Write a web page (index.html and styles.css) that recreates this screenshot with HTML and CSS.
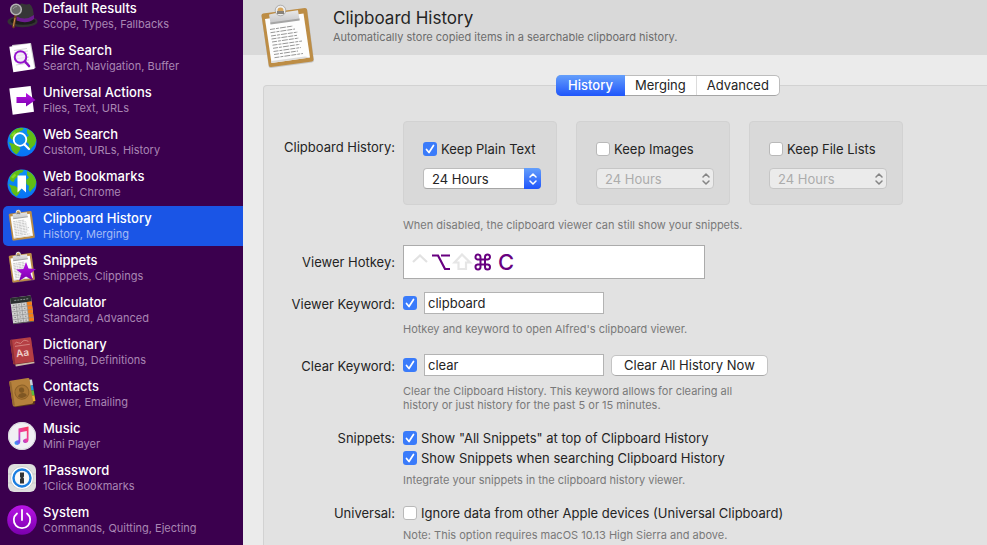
FILE: index.html
```html
<!DOCTYPE html>
<html lang="en">
<head>
    <meta charset="UTF-8">
    <meta name="viewport" content="width=device-width, initial-scale=1.0">
    <title>Clipboard History</title>
    <link rel="stylesheet" href="styles.css">
</head>
<body>
    <!-- shared drawings -->
    <svg class="defs" aria-hidden="true">
        <defs>
            <linearGradient id="purple" x1="0" y1="0" x2="0" y2="1">
                <stop offset="0" stop-color="#b914e6"/>
                <stop offset="1" stop-color="#7a00ad"/>
            </linearGradient>
            <linearGradient id="ocean" x1="0" y1="0" x2="0" y2="1">
                <stop offset="0" stop-color="#0b93f5"/>
                <stop offset="1" stop-color="#0872f5"/>
            </linearGradient>
            <linearGradient id="note" x1="1" y1="0" x2="0" y2="1">
                <stop offset="0" stop-color="#ff3b55"/>
                <stop offset="0.45" stop-color="#e83fa8"/>
                <stop offset="0.75" stop-color="#7d50ee"/>
                <stop offset="1" stop-color="#20b4f5"/>
            </linearGradient>
            <linearGradient id="metal" x1="0" y1="0" x2="0" y2="1">
                <stop offset="0" stop-color="#f4f4f4"/>
                <stop offset="1" stop-color="#c4c4c6"/>
            </linearGradient>
        </defs>
        <symbol id="clipboard" viewBox="0 0 56 64">
            <path d="M3 10L45 4.500Q47 4.500 47.300 6L54 56Q54 58 52 58.500L11 64Q9 64 8.700 62.500L1.500 12Q1.500 10.500 3 10z" fill="#8b8b8b" opacity="0.4"/>
            <path d="M3 9.500L45 4Q46.800 4 47 5.500L53.500 55.500Q53.500 57 52 57.500L11 63Q9 63 8.800 61.500L1.500 11.500Q1.500 10 3 9.500z" fill="#bd8d45"/>
            <path d="M5 15L43.500 9.500L50 53.500L11.500 59z" fill="#fdfdfd"/>
            <path d="M50 53.500L11.500 59L11.200 57L45 52.500z" fill="#dcdcdc"/>
            <g stroke="#8a8a8a" stroke-width="0.900" stroke-dasharray="5 1 3 1 6 1">
                <path d="M10 25.500L33 22M10.500 28.700L35 25M11 32L38 28M11.500 35L37 31.300M12 38L39 34M12.500 41.200L42 37M13 44.300L40 40.300M13.500 47.500L41 43.500M14 50.500L38 47M14.500 53.700L43 49.500"/>
            </g>
            <path d="M9 10.500L16 9Q15 3.500 19.500 2.200Q24.500 1.500 25.500 8L38 6.300L39.500 15.500L10.500 19.500z" fill="url(#metal)"/>
            <path d="M10.200 18.500L39.500 14.500L39.700 16.500L10.500 20.500z" fill="#a5a5a5"/>
            <circle cx="20.500" cy="6.500" r="4" fill="#d9a75b" stroke="#eee" stroke-width="2"/>
            <circle cx="20.500" cy="6.500" r="5.300" fill="none" stroke="#8e8e8e" stroke-width="0.600"/>
            <path d="M17 7H24V10H17z" fill="#87827a"/>
        </symbol>
        <symbol id="globe" viewBox="0 0 30 30">
            <circle cx="15" cy="15" r="14.500" fill="url(#ocean)"/>
            <path d="M5 5Q9 1.200 14 .8L17 1.500L15 3.500L13 4L11 7L8 10L6.500 13L4 12L2.500 9z" fill="#61bd16"/>
            <path d="M1.500 15L5 16.500L8 17L12 19.500L13.500 21.500L12 24.500L9.500 27.500Q6 25.500 4.500 22.500L4 19.500z" fill="#61bd16"/>
            <path d="M20 2L24 4Q28.500 8 29.200 13L28 17.500L25 20.500L23 23L21.500 20.500L22 17L19.500 15L19 11L22 8.500L20 6z" fill="#61bd16"/>
            <path d="M4 8L8 4.500L9 6.500L6 9.500z" fill="#86d92b"/>
        </symbol>
        <symbol id="updown" viewBox="0 0 10 14">
            <path d="M2 5L5 2L8 5M2 9L5 12L8 9" fill="none" stroke="currentColor" stroke-width="1.500" stroke-linecap="round" stroke-linejoin="round"/>
        </symbol>
    </svg>

    <nav class="sidebar" aria-label="Features">
        <a class="item" href="#">
            <svg class="icon" viewBox="0 0 30 30">
                <ellipse cx="15.500" cy="20.500" rx="15" ry="5.800" fill="#333"/>
                <ellipse cx="16" cy="20" rx="12.500" ry="3.800" fill="#1b1b1b"/>
                <path d="M9.500 18Q10 3 15 2.500Q19 4 22.500 3Q26.500 5 27 17.500Q19 23.500 9.500 18z" fill="#363636"/>
                <path d="M9.500 15.500Q19 20 27 14V18Q20 23.500 9.500 19.500z" fill="#6c1c8f"/>
                <path d="M8.500 14.500L6.500 26" stroke="#70401c" stroke-width="2.400" stroke-linecap="round"/>
                <path d="M8 17L6.300 25.500" stroke="#c98e50" stroke-width="1"/>
                <circle cx="9" cy="8.500" r="5.300" fill="#6a6a6a" stroke="#b5b5b5" stroke-width="1.500"/>
                <path d="M6 8Q7 5.500 10 5.500" fill="none" stroke="#999" stroke-width="1"/>
            </svg>
            <span class="item-text"><span class="item-title">Default Results</span><span class="item-sub">Scope, Types, Fallbacks</span></span>
        </a>
        <a class="item" href="#">
            <svg class="icon" viewBox="0 0 30 30">
                <path d="M5 2L24 0L28.500 25L10 28z" fill="#cfcfcf"/>
                <path d="M2.300 3.700L23 .5L27.500 26L6.300 29.300z" fill="#fff"/>
                <path d="M7 7.500L20 5.500M7 10L21 8M8 13L21 11M8 16L22 14M8 19L22 17M9 22L22 20" stroke="#c5c5c5" stroke-width="0.700"/>
                <circle cx="13.500" cy="14" r="5.800" fill="#f1e6f7" fill-opacity="0.700" stroke="#9514cf" stroke-width="2"/>
                <path d="M18 18.500L22 23" stroke="#8d12c4" stroke-width="2.600" stroke-linecap="round"/>
            </svg>
            <span class="item-text"><span class="item-title">File Search</span><span class="item-sub">Search, Navigation, Buffer</span></span>
        </a>
        <a class="item" href="#">
            <svg class="icon" viewBox="0 0 30 30">
                <path d="M2.300 3.500L23.700 1L27 26.700L5.700 29.700z" fill="#fff"/>
                <path d="M9.500 12H19V8L28.500 15L19 21.500V18H9.500z" fill="url(#purple)"/>
            </svg>
            <span class="item-text"><span class="item-title">Universal Actions</span><span class="item-sub">Files, Text, URLs</span></span>
        </a>
        <a class="item" href="#">
            <svg class="icon" viewBox="0 0 30 30">
                <use href="#globe"/>
                <circle cx="13" cy="12.500" r="6.300" fill="#2095e8" fill-opacity="0.500" stroke="#fff" stroke-width="1.800"/>
                <path d="M17.500 17.500L22 22" stroke="#fff" stroke-width="2.200" stroke-linecap="round"/>
            </svg>
            <span class="item-text"><span class="item-title">Web Search</span><span class="item-sub">Custom, URLs, History</span></span>
        </a>
        <a class="item" href="#">
            <svg class="icon" viewBox="0 0 30 30">
                <use href="#globe"/>
                <path d="M10.500 6.500H19V23.500L14.700 19.500L10.500 23.500z" fill="#fff"/>
            </svg>
            <span class="item-text"><span class="item-title">Web Bookmarks</span><span class="item-sub">Safari, Chrome</span></span>
        </a>
        <a class="item selected" href="#" aria-current="page">
            <svg class="icon" viewBox="0 0 30 30"><use href="#clipboard" x="1" y="-2" width="28" height="32"/></svg>
            <span class="item-text"><span class="item-title">Clipboard History</span><span class="item-sub">History, Merging</span></span>
        </a>
        <a class="item" href="#">
            <svg class="icon" viewBox="0 0 30 30">
                <use href="#clipboard" x="1" y="-2" width="28" height="32"/>
                <path d="M19 9L21.500 15.500L29 16L23.500 20.500L26 27.500L19 23.500L12 28L14.500 20.500L9 16.500L16.500 16z" fill="url(#purple)"/>
            </svg>
            <span class="item-text"><span class="item-title">Snippets</span><span class="item-sub">Snippets, Clippings</span></span>
        </a>
        <a class="item" href="#">
            <svg class="icon" viewBox="0 0 30 30">
                <g transform="translate(3 3) rotate(-7)">
                    <rect width="21" height="26" rx="1" fill="#d0d0cf"/>
                    <path d="M0 0H21V6H0z" fill="#2b3030"/>
                    <path d="M4 3H18" stroke="#8c9694" stroke-dasharray="2 1"/>
                    <path d="M16 6H21V26H16z" fill="#f57e15"/>
                    <path d="M0 10H21M0 14H21M0 18H21M0 22H21M5.300 6V26M10.600 6V26M16 6V26" stroke="#8b8b8b" stroke-width="0.600"/>
                    <path d="M2 8H15M2 12H15M2 16H15M2 20H15M2 24H15" stroke="#888" stroke-dasharray="1.500 3.800"/>
                    <path d="M0 26H21" stroke="#555"/>
                </g>
            </svg>
            <span class="item-text"><span class="item-title">Calculator</span><span class="item-sub">Standard, Advanced</span></span>
        </a>
        <a class="item" href="#">
            <svg class="icon" viewBox="0 0 30 30">
                <g transform="translate(3 3) rotate(-8)">
                    <path d="M0 1H21V26H2L0 24z" fill="#772b30"/>
                    <path d="M2 25L21 25V26.500L2 27z" fill="#c9b8a5"/>
                    <rect width="21" height="24.500" rx="1" fill="#b53f44"/>
                    <path d="M0 0H2V24.500H0z" fill="#8d3036"/>
                    <path d="M4 4.500Q6 2 8 4T12 3.500T18 4M4 7H19" fill="none" stroke="#df9a94" stroke-width="0.700"/>
                    <text class="cover-text" x="4" y="18">Aa</text>
                </g>
            </svg>
            <span class="item-text"><span class="item-title">Dictionary</span><span class="item-sub">Spelling, Definitions</span></span>
        </a>
        <a class="item" href="#">
            <svg class="icon" viewBox="0 0 30 30">
                <g transform="translate(2 2) rotate(-9)">
                    <path d="M2 2H22V27H2z" fill="#5b3a18"/>
                    <path d="M20 2H23V8H20z" fill="#c9d3db"/>
                    <path d="M20 8H23V13H20z" fill="#1f9ae0"/>
                    <path d="M20 13H23V18H20z" fill="#5cbd3c"/>
                    <path d="M20 18H23V24H20z" fill="#e7b52c"/>
                    <rect width="20.500" height="26" rx="1.500" fill="#b5813c"/>
                    <path d="M0 1V25H2V1z" fill="#966830"/>
                    <circle cx="11" cy="13" r="7" fill="#a97634" stroke="#8c6027" stroke-width="1"/>
                    <circle cx="11" cy="11" r="2.600" fill="#7f5723"/>
                    <path d="M6.500 17Q7.500 14 11 14T15.500 17Q11 21 6.500 17z" fill="#7f5723"/>
                </g>
            </svg>
            <span class="item-text"><span class="item-title">Contacts</span><span class="item-sub">Viewer, Emailing</span></span>
        </a>
        <a class="item" href="#">
            <svg class="icon" viewBox="0 0 30 30">
                <circle cx="15" cy="15" r="14" fill="#f1f0f4"/>
                <circle cx="15" cy="15" r="13.500" fill="none" stroke="#d5d4da"/>
                <path d="M11.500 7.500L21.500 5.500V19Q21.500 21.500 19 22Q16 22 16 20Q16 18 19.800 17.500V10L13.300 11.300V21Q13 23.500 10.500 24Q7.500 24 7.500 21.800Q7.500 19.800 11.500 19.300z" fill="url(#note)"/>
            </svg>
            <span class="item-text"><span class="item-title">Music</span><span class="item-sub">Mini Player</span></span>
        </a>
        <a class="item" href="#">
            <svg class="icon" viewBox="0 0 30 30">
                <rect x="1" y="1" width="28" height="28" rx="6" fill="#dedede"/>
                <path d="M1 11H29M1 20H29" stroke="#c9c9c9"/>
                <circle cx="15" cy="15" r="11.500" fill="#fff" stroke="#bbb" stroke-width="0.700"/>
                <circle cx="15" cy="15" r="8.500" fill="#f8f8f8" stroke="#1a7de0" stroke-width="2.400"/>
                <path d="M13 9.500H17V13.500L16.200 14.500L17 15.500V20.500H13V16L13.800 15L13 14z" fill="#303236"/>
            </svg>
            <span class="item-text"><span class="item-title">1Password</span><span class="item-sub">1Click Bookmarks</span></span>
        </a>
        <a class="item" href="#">
            <svg class="icon" viewBox="0 0 30 30">
                <circle cx="15" cy="15" r="14.800" fill="url(#purple)"/>
                <path d="M10 8.500A8.200 8.200 0 1 0 20 8.500M15 5V15" fill="none" stroke="#fff" stroke-width="1.800" stroke-linecap="round"/>
            </svg>
            <span class="item-text"><span class="item-title">System</span><span class="item-sub">Commands, Quitting, Ejecting</span></span>
        </a>
    </nav>

    <main class="main">
        <header class="header">
            <svg class="header-icon" viewBox="0 0 56 64"><use href="#clipboard"/></svg>
            <div>
                <h1>Clipboard History</h1>
                <p>Automatically store copied items in a searchable clipboard history.</p>
            </div>
        </header>

        <section class="panel">
            <div class="tabs" role="tablist">
                <button class="tab active" type="button" role="tab" aria-selected="true">History</button>
                <button class="tab" type="button" role="tab" aria-selected="false">Merging</button>
                <button class="tab" type="button" role="tab" aria-selected="false">Advanced</button>
            </div>

            <form class="form">
                <div class="row">
                    <span class="label card-label">Clipboard History:</span>
                    <div class="field">
                        <div class="cards">
                            <div class="card">
                                <label class="check"><input type="checkbox" checked>Keep Plain Text</label>
                                <div class="select">
                                    <select aria-label="Keep plain text for"><option>24 Hours</option></select>
                                    <span class="arrows"><svg><use href="#updown"/></svg></span>
                                </div>
                            </div>
                            <div class="card">
                                <label class="check"><input type="checkbox">Keep Images</label>
                                <div class="select">
                                    <select aria-label="Keep images for" disabled><option>24 Hours</option></select>
                                    <span class="arrows off"><svg><use href="#updown"/></svg></span>
                                </div>
                            </div>
                            <div class="card">
                                <label class="check"><input type="checkbox">Keep File Lists</label>
                                <div class="select">
                                    <select aria-label="Keep file lists for" disabled><option>24 Hours</option></select>
                                    <span class="arrows off"><svg><use href="#updown"/></svg></span>
                                </div>
                            </div>
                        </div>
                        <p class="hint card-hint">When disabled, the clipboard viewer can still show your snippets.</p>
                    </div>
                </div>

                <div class="row">
                    <span class="label hotkey-label" id="hotkeyLabel">Viewer Hotkey:</span>
                    <div class="field">
                        <div class="hotkey" tabindex="0" role="group" aria-labelledby="hotkeyLabel">
                            <svg class="keys" viewBox="0 0 80 18">
                                <g fill="none" stroke-width="2.200">
                                    <path d="M1 9L8 2.500L15 9" stroke="#e2e2e2"/>
                                    <path d="M20 2.500H26L33 16H38M29 2.500H38" stroke="#680080"/>
                                    <path d="M50 1.500L58 9.500H54V16H46.500V9.500H42.500z" stroke="#e6e6e6"/>
                                    <path d="M68.500 6.500H65.500A2.500 2.500 0 1 1 68.500 4V14A2.500 2.500 0 1 1 65.500 11.500H75.500A2.500 2.500 0 1 1 73 14V4A2.500 2.500 0 1 1 75.500 6.500z" stroke="#680080" stroke-width="2"/>
                                </g>
                            </svg>
                            <span>C</span>
                        </div>
                    </div>
                </div>

                <div class="row">
                    <label class="label" for="viewerKeyword">Viewer Keyword:</label>
                    <div class="field">
                        <div class="line">
                            <input type="checkbox" aria-label="Enable viewer keyword" checked>
                            <input class="text" id="viewerKeyword" type="text" value="clipboard">
                        </div>
                        <p class="hint">Hotkey and keyword to open Alfred's clipboard viewer.</p>
                    </div>
                </div>

                <div class="row spaced">
                    <label class="label" for="clearKeyword">Clear Keyword:</label>
                    <div class="field">
                        <div class="line">
                            <input type="checkbox" aria-label="Enable clear keyword" checked>
                            <input class="text" id="clearKeyword" type="text" value="clear">
                            <button class="button" type="button">Clear All History Now</button>
                        </div>
                        <p class="hint">Clear the Clipboard History. This keyword allows for clearing all<br>history or just history for the past 5 or 15 minutes.</p>
                    </div>
                </div>

                <div class="row check-row">
                    <span class="label check-label">Snippets:</span>
                    <div class="field">
                        <label class="check"><input type="checkbox" checked>Show "All Snippets" at top of Clipboard History</label>
                        <label class="check"><input type="checkbox" checked>Show Snippets when searching Clipboard History</label>
                        <p class="hint check-hint">Integrate your snippets in the clipboard history viewer.</p>
                    </div>
                </div>

                <div class="row check-row">
                    <span class="label check-label">Universal:</span>
                    <div class="field">
                        <label class="check"><input type="checkbox">Ignore data from other Apple devices (Universal Clipboard)</label>
                        <p class="hint check-hint">Note: This option requires macOS 10.13 High Sierra and above.</p>
                    </div>
                </div>
            </form>
        </section>
    </main>
</body>
</html>
```

FILE: styles.css
```css
* {
    margin: 0;
    padding: 0;
    box-sizing: border-box;
}

body {
    display: flex;
    height: 100vh;
    overflow: hidden;
    font-family: Inter, "Liberation Sans", sans-serif;
    font-size: 13px;
    line-height: 16px;
    color: #242424;
    background: #ebebeb;
}

input, select, button {
    font: inherit;
    color: inherit;
}

.defs {
    position: absolute;
    width: 0;
    height: 0;
}

/* Sidebar, scrolled down a little */
.sidebar {
    flex: 0 0 243px;
    display: flex;
    flex-direction: column;
    gap: 2px;
    margin-top: -4px;
    padding-left: 3px;
    background: #3b004e;
}

.item {
    flex: none;
    display: flex;
    align-items: center;
    gap: 6px;
    height: 40px;
    padding-left: 4px;
    border-radius: 5px 0 0 5px;
    color: #fff;
    text-decoration: none;
}

.item.selected {
    background: #1a55e6;
}

.icon {
    flex: none;
    width: 30px;
    height: 30px;
    overflow: visible;
}

.item-text {
    display: flex;
    flex-direction: column;
}

.item-title {
    font-weight: 500;
}

.item-sub {
    font-size: 11px;
    color: #a986b3;
}

.selected .item-sub {
    color: #a5bcf5;
}

.cover-text {
    font-size: 10px;
    font-weight: 600;
    fill: #efd0cd;
}

/* Right side */
.main {
    flex: 1;
    min-width: 0;
    overflow: hidden;
    display: flex;
    flex-direction: column;
}

.header {
    flex: none;
    display: flex;
    align-items: flex-start;
    gap: 17px;
    height: 55px;
    padding: 4px 17px;
    background: #d9d9d9;
}

.header-icon {
    flex: none;
    width: 56px;
    height: 64px;
}

.header h1 {
    font-size: 17px;
    font-weight: 400;
    line-height: 24px;
    margin-top: 2px;
}

.header p {
    font-size: 11px;
    line-height: 14px;
    color: #6c6c6c;
}

/* The panel runs past the right edge of the window */
.panel {
    flex: 1;
    margin: 30px -86px 0 20px;
    border: 1px solid #d2d2d2;
    border-bottom: none;
    border-radius: 4px 4px 0 0;
    background: #e2e2e2;
}

.tabs {
    display: flex;
    width: max-content;
    margin: -11px auto 0;
    border: 1px solid #bdbdbd;
    border-bottom-color: #a5a5a5;
    border-radius: 5px;
    background: #fff;
}

.tab {
    height: 19px;
    padding: 0 10px;
    border: none;
    border-left: 1px solid #dcdcdc;
    background: none;
    line-height: 19px;
}

.tab.active {
    margin: -1px 0 -1px -1px;
    height: 21px;
    padding: 0 12px;
    border: none;
    border-radius: 5px 0 0 5px;
    background: linear-gradient(#649ffb, #1f55fb);
    color: #fff;
    font-weight: 500;
}

.tab.active + .tab {
    border-left: none;
}

.form {
    display: flex;
    flex-direction: column;
    gap: 13px;
    margin-top: 25px;
}

.row {
    display: grid;
    grid-template-columns: 131px 1fr;
    column-gap: 8px;
}

.row.spaced {
    margin-top: 5px;
}

.row.check-row {
    margin-top: 3px;
}

.label {
    text-align: right;
    line-height: 24px;
    white-space: nowrap;
}

.card-label {
    padding-top: 14px;
}

.hotkey-label {
    line-height: 34px;
}

.check-label {
    line-height: 20px;
}

.cards {
    display: flex;
    gap: 19px;
}

.card {
    width: 154px;
    padding: 17px 15px 15px 19px;
    border: 1px solid #d2d2d2;
    border-radius: 4px;
    background: #d9d9d9;
}

.check {
    display: flex;
    align-items: center;
    gap: 4px;
    height: 20px;
    white-space: nowrap;
}

input[type="checkbox"] {
    appearance: none;
    flex: none;
    width: 14px;
    height: 14px;
    border: 1px solid #b9b9b9;
    border-radius: 3px;
    background: #fff;
}

input[type="checkbox"]:checked {
    border: none;
    background: #3a7bfa url("data:image/svg+xml,%3Csvg xmlns='http://www.w3.org/2000/svg' viewBox='0 0 14 14'%3E%3Cpath d='M3.500 7.500L6 10.500L10.500 3.500' fill='none' stroke='white' stroke-width='1.700' stroke-linecap='round' stroke-linejoin='round'/%3E%3C/svg%3E") center / 14px 14px no-repeat;
}

.select {
    display: flex;
    position: relative;
    margin-top: 9px;
}

.select select {
    appearance: none;
    width: 118px;
    height: 21px;
    padding: 0 26px 0 8px;
    border: 1px solid #bcbcbc;
    border-bottom-color: #a5a5a5;
    border-radius: 4px;
    background: #fff;
}

.select select:disabled {
    border-color: #c6c6c6;
    background: #ebebeb;
    color: #acacac;
    opacity: 1;
}

.arrows {
    position: absolute;
    top: 0;
    right: 0;
    display: flex;
    align-items: center;
    justify-content: center;
    width: 17px;
    height: 21px;
    border-radius: 0 4px 4px 0;
    background: linear-gradient(#649ffb, #1f55fb);
    color: #fff;
    pointer-events: none;
}

.arrows.off {
    background: none;
    color: #858585;
}

.arrows svg {
    width: 10px;
    height: 14px;
}

.hint {
    margin-top: 8px;
    font-size: 11px;
    line-height: 14px;
    color: #797979;
}

.card-hint {
    margin-top: 13px;
}

.check-hint {
    margin-top: 5px;
}

.hotkey {
    display: flex;
    align-items: center;
    gap: 6px;
    width: 302px;
    height: 34px;
    padding-left: 8px;
    border: 1px solid #ababab;
    background: #fff;
    color: #680080;
    font-size: 22px;
    font-weight: 500;
    line-height: 32px;
}

.keys {
    width: 80px;
    height: 18px;
}

.line {
    display: flex;
    align-items: center;
    gap: 7px;
}

.text {
    width: 180px;
    height: 22px;
    padding: 0 3px;
    border: 1px solid #b3b3b3;
    background: #fff;
}

.button {
    height: 21px;
    padding: 0 12px;
    border: 1px solid #c4c4c4;
    border-bottom-color: #a8a8a8;
    border-radius: 5px;
    background: #fff;
    line-height: 19px;
}
```
